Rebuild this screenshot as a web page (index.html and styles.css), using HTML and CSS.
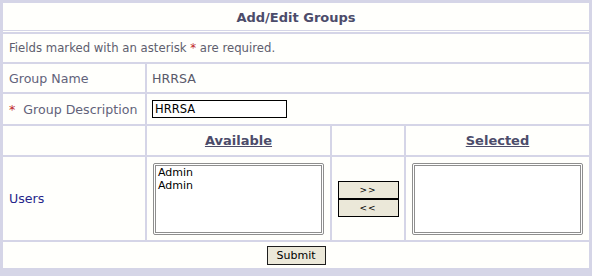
FILE: index.html
```html
<!DOCTYPE html>
<html lang="en">
<head>
    <meta charset="UTF-8">
    <title>Add/Edit Groups</title>
    <link rel="stylesheet" href="styles.css">
</head>
<body>
    <form class="group-form">
        <table class="form-table">
            <colgroup>
                <col class="col-label">
                <col class="col-list">
                <col class="col-move">
                <col class="col-list">
            </colgroup>
            <tr>
                <td colspan="4" class="form-title">Add/Edit Groups</td>
            </tr>
            <tr class="row-note">
                <td colspan="4">Fields marked with an asterisk <span class="req">*</span> are required.</td>
            </tr>
            <tr class="row-name">
                <td class="label">Group Name</td>
                <td colspan="3" class="value">HRRSA</td>
            </tr>
            <tr class="row-desc">
                <td class="label"><span class="req req-gap">*</span>Group Description</td>
                <td colspan="3" class="value"><input type="text" class="text-input" value="HRRSA"></td>
            </tr>
            <tr class="row-heads">
                <td></td>
                <td class="list-head"><a href="#">Available</a></td>
                <td></td>
                <td class="list-head"><a href="#">Selected</a></td>
            </tr>
            <tr class="row-users">
                <td class="label users">Users</td>
                <td class="list-cell">
                    <select multiple class="list-box">
                        <option>Admin</option>
                        <option>Admin</option>
                    </select>
                </td>
                <td class="move-cell">
                    <div class="move-stack">
                        <button type="button" class="move-btn">&gt;&gt;</button>
                        <button type="button" class="move-btn">&lt;&lt;</button>
                    </div>
                </td>
                <td class="list-cell">
                    <select multiple class="list-box"></select>
                </td>
            </tr>
            <tr class="row-submit">
                <td colspan="4"><button type="submit" class="submit-btn">Submit</button></td>
            </tr>
        </table>
    </form>
</body>
</html>
```

FILE: styles.css
```css
body {
    margin: 0;
    background-color: #d5d5e7;
    font-family: "DejaVu Sans", Verdana, sans-serif;
    font-size: 12px;
    color: #5e5e6e;
}

.group-form {
    margin: 1px;
}

.form-table {
    width: 590px;
    table-layout: fixed;
    border-collapse: separate;
    border-spacing: 2px;
}

.col-label { width: 142px; }
.col-list { width: 183px; }
.col-move { width: 72px; }

.form-table td {
    background-color: #fffffc;
    padding: 0 0 0 6px;
    vertical-align: middle;
}

.form-table td.form-title {
    height: 29px;
    padding: 0;
    text-align: center;
    font-weight: bold;
    font-size: 13px;
    color: #4c4c6a;
    box-shadow: inset 0 -1px 0 #fffffc, inset 0 -2px 0 #d5d5e7;
}

.row-note td {
    height: 28px;
    font-size: 11.7px;
}
.row-name td { height: 28px; }
.row-desc td { height: 30px; }
.row-heads td { height: 29px; }
.row-users td { height: 83px; }
.row-submit td { height: 26px; }

.label {
    font-size: 12.6px;
    color: #62627a;
}

.form-table td.value {
    padding-left: 5px;
    font-size: 12.6px;
    color: #5a5a6a;
}

.req {
    color: #c0282a;
}

.req-gap {
    margin-right: 8px;
}

.label.users {
    color: #26268a;
}

.text-input {
    display: block;
    box-sizing: border-box;
    width: 135px;
    height: 18px;
    margin: 0;
    padding: 0 2px 0 2px;
    border: 1px solid #000;
    font-family: "DejaVu Sans", Tahoma, sans-serif;
    font-size: 11.5px;
    color: #000;
    background: #fff;
}

.form-table td.list-head {
    padding: 0;
    text-align: center;
    font-size: 13px;
    font-weight: bold;
}

.list-head a {
    color: #4c4c6a;
    text-decoration: underline;
}

.form-table td.list-cell {
    padding: 0;
    text-align: center;
}

.list-box {
    display: block;
    box-sizing: border-box;
    width: 171px;
    height: 72px;
    margin: 0 auto;
    padding: 0 2px;
    border: 3px double #8e8e8e;
    background: #fff;
    font-family: "DejaVu Sans", Tahoma, sans-serif;
    font-size: 11px;
    color: #000;
    overflow: hidden;
    outline: none;
}

.list-box option {
    padding: 0;
    line-height: 13px;
    min-height: 13px;
}

.form-table td.move-cell {
    padding: 0;
}

.move-stack {
    display: flex;
    flex-direction: column;
    width: 61px;
    margin: 0 auto;
    background-color: #000;
}

.move-btn {
    display: block;
    box-sizing: border-box;
    width: 61px;
    height: 18px;
    margin: 0;
    padding: 0;
    border: 1px solid #000;
    border-radius: 0;
    background-color: #ebe8d9;
    font-family: "DejaVu Sans", Tahoma, sans-serif;
    font-size: 9px;
    letter-spacing: 1px;
    color: #000;
}

.form-table .row-submit td {
    padding: 0;
    text-align: center;
}

.submit-btn {
    box-sizing: border-box;
    width: 59px;
    height: 19px;
    padding: 0;
    border: 1px solid #1e1e1e;
    border-radius: 0;
    background-color: #ebe8d9;
    font-family: "DejaVu Sans", Tahoma, sans-serif;
    font-size: 11px;
    color: #000;
    vertical-align: middle;
}
```
